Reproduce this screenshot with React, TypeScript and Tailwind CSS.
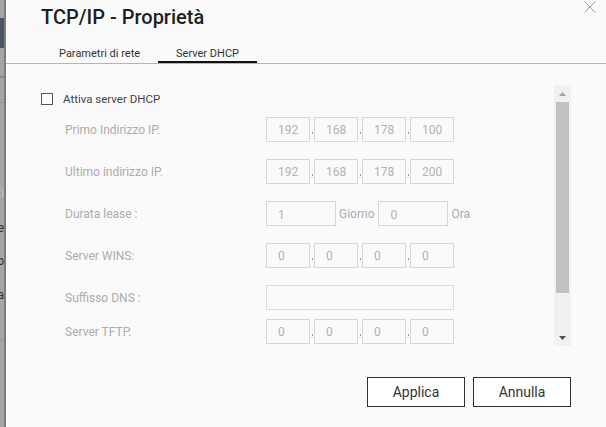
import React from "react";

function IpBox({ v }: { v: string }) {
  return (
    <div className="w-[44px] h-[25px] border border-[#d6d6d6] flex items-center pl-[11px] text-[12px] text-[#b2b2b2]">
      {v}
    </div>
  );
}

function Sep() {
  return (
    <div className="w-[4px] h-[25px] flex flex-col items-center pt-[15px]">
      <div className="w-[1px] h-[2px] bg-[#9a9a9a]" />
    </div>
  );
}

function Ip({ vals }: { vals: string[] }) {
  return (
    <div className="flex items-center">
      <IpBox v={vals[0]} />
      <Sep />
      <IpBox v={vals[1]} />
      <Sep />
      <IpBox v={vals[2]} />
      <Sep />
      <IpBox v={vals[3]} />
    </div>
  );
}

function Label({ children }: { children: React.ReactNode }) {
  return <div className="w-[201px] text-[12px] leading-[16px] text-[#acacac]">{children}</div>;
}

export default function App() {
  return (
    <div className="w-[606px] h-[427px] flex overflow-hidden bg-[#fafafa] font-[Roboto,sans-serif]">
      {/* glimpse of background page */}
      <div className="w-[6px] shrink-0 flex flex-col bg-[#a5a5a5] border-r-2 border-[#7d7d7d] overflow-hidden">
        <div className="h-[18px] shrink-0" />
        <div className="h-[30px] shrink-0 bg-[#4d5461]" />
        <div className="h-[28px] shrink-0" />
        <div className="h-[2px] shrink-0 bg-[#8a8a8a]" />
        <div className="h-[24px] shrink-0" />
        <div className="h-0 shrink-0 border-t border-dotted border-[#8c8c8c]" />
        <div className="h-[82px] shrink-0" />
        <div className="h-[16px] shrink-0 flex justify-end whitespace-nowrap text-[12px] leading-[16px] text-[#c2c2c2]">ti</div>
        <div className="h-[19px] shrink-0" />
        <div className="h-[16px] shrink-0 flex justify-end whitespace-nowrap text-[12px] leading-[16px] text-[#333]">e</div>
        <div className="h-[17px] shrink-0" />
        <div className="h-[16px] shrink-0 flex justify-end whitespace-nowrap text-[12px] leading-[16px] text-[#333]">o</div>
        <div className="h-[18px] shrink-0" />
        <div className="h-[16px] shrink-0 flex justify-end whitespace-nowrap text-[12px] leading-[16px] text-[#333]">a</div>
        <div className="h-[37px] shrink-0" />
        <div className="h-0 shrink-0 border-t border-dotted border-[#8c8c8c]" />
      </div>

      {/* dialog */}
      <div className="relative flex-1 flex flex-col bg-[#fafafa]">
        <div className="absolute top-[1px] right-[10px] w-[12px] h-[12px]">
          <svg width="12" height="12" viewBox="0 0 12 12">
            <path d="M0.5 0.5 L11.5 11.5 M11.5 0.5 L0.5 11.5" stroke="#9c9c9c" strokeWidth="1" fill="none" />
          </svg>
        </div>

        <div className="pl-[35px] pt-[5px] text-[20px] leading-[24px] font-medium text-[#1e1e1e]">
          TCP/IP - Proprietà
        </div>

        <div className="mt-[17px] flex pl-[35px] border-b border-[#b4b4b4]">
          <div className="px-[18px] text-[11px] leading-[15px] text-[#333] border-b-2 border-transparent">
            Parametri di rete
          </div>
          <div className="px-[18px] text-[11px] leading-[15px] text-[#333] border-b-2 border-[#111]">
            Server DHCP
          </div>
        </div>

        <div className="mt-[21px] flex pl-[35px] pr-[35px]">
          <div className="flex-1 h-[261px] overflow-hidden flex flex-col">
            <div className="pt-[7px] flex items-center gap-[10px]">
              <div className="w-[12px] h-[12px] border border-[#555]" />
              <div className="text-[11.5px] leading-[14px] text-[#444]">Attiva server DHCP</div>
            </div>

            <div className="mt-[11px] flex items-center pl-[24px]">
              <Label>Primo Indirizzo IP.</Label>
              <Ip vals={["192", "168", "178", "100"]} />
            </div>

            <div className="mt-[17px] flex items-center pl-[24px]">
              <Label>Ultimo indirizzo IP.</Label>
              <Ip vals={["192", "168", "178", "200"]} />
            </div>

            <div className="mt-[17px] flex items-center pl-[24px]">
              <Label>Durata lease :</Label>
              <div className="flex items-center">
                <div className="w-[70px] h-[25px] border border-[#d6d6d6] flex items-center pl-[11px] pt-[3px] text-[12px] text-[#b2b2b2]">
                  1
                </div>
                <div className="ml-[3px] mr-[4px] text-[12px] leading-[16px] text-[#acacac]">Giorno</div>
                <div className="w-[70px] h-[25px] border border-[#d6d6d6] flex items-center pl-[11px] pt-[3px] text-[12px] text-[#b2b2b2]">
                  0
                </div>
                <div className="ml-[3px] text-[12px] leading-[16px] text-[#acacac]">Ora</div>
              </div>
            </div>

            <div className="mt-[17px] flex items-center pl-[24px]">
              <Label>Server WINS:</Label>
              <Ip vals={["0", "0", "0", "0"]} />
            </div>

            <div className="mt-[17px] flex items-center pl-[24px]">
              <Label>Suffisso DNS :</Label>
              <div className="w-[188px] h-[25px] border border-[#dcdcdc]" />
            </div>

            <div className="mt-[9px] flex items-center pl-[24px]">
              <Label>Server TFTP.</Label>
              <Ip vals={["0", "0", "0", "0"]} />
            </div>
          </div>

          {/* scrollbar */}
          <div className="w-[17px] h-[261px] bg-[#f1f1f1] flex flex-col">
            <div className="h-[17px] flex items-center justify-center">
              <svg width="7" height="4" viewBox="0 0 7 4">
                <path d="M3.5 0 L7 4 L0 4 Z" fill="#a3a3a3" />
              </svg>
            </div>
            <div className="mx-[2px] h-[191px] bg-[#c1c1c1]" />
            <div className="flex-1" />
            <div className="h-[17px] flex items-center justify-center">
              <svg width="7" height="4" viewBox="0 0 7 4">
                <path d="M0 0 L7 0 L3.5 4 Z" fill="#505050" />
              </svg>
            </div>
          </div>
        </div>

        <div className="mt-[31px] flex justify-end gap-[8px] pr-[35px]">
          <button className="w-[98px] h-[30px] border border-[#2f2f2f] bg-white text-[14px] text-[#333]">
            Applica
          </button>
          <button className="w-[98px] h-[30px] border border-[#2f2f2f] bg-white text-[14px] text-[#333]">
            Annulla
          </button>
        </div>
      </div>
    </div>
  );
}
